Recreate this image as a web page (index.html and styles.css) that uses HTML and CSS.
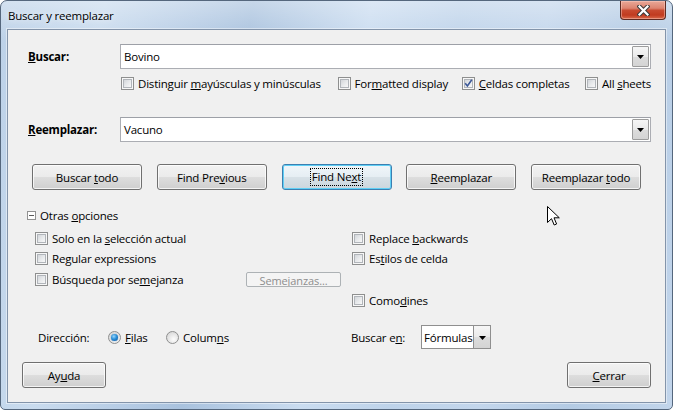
FILE: index.html
```html
<!DOCTYPE html>
<html lang="es">
<head>
<meta charset="utf-8">
<title>Buscar y reemplazar</title>
<link rel="stylesheet" href="styles.css">
</head>
<body>
<div class="window">
  <div class="titlebar">
    <span class="title">Buscar y reemplazar</span>
    <div class="close">
      <svg width="13" height="11" viewBox="0 0 13 11"><path d="M2.5 1.5 L10.5 9.5 M10.5 1.5 L2.5 9.5" stroke="#3a3a3a" stroke-width="4.2" stroke-linecap="square"/><path d="M2.5 1.5 L10.5 9.5 M10.5 1.5 L2.5 9.5" stroke="#fff" stroke-width="2.2" stroke-linecap="square"/></svg>
    </div>
  </div>
  <div class="client">
    <div class="field-row first">
      <span class="field-label"><u>B</u>uscar:</span>
      <div class="combo wide"><span class="combo-text">Bovino</span><span class="drop"><svg width="7" height="4" viewBox="0 0 7 4"><path d="M0 0 H7 L3.5 4 Z" fill="#000"/></svg></span></div>
    </div>
    <div class="check-row">
      <label class="opt w1"><span class="cb"><i></i></span><span>Distinguir <u>m</u>ayúsculas y minúsculas</span></label>
      <label class="opt w2"><span class="cb"><i></i></span><span>For<u>m</u>atted display</span></label>
      <label class="opt w3"><span class="cb"><i><svg width="9" height="9" viewBox="0 0 9 9"><path d="M1.2 4.3 L3.4 7 L7.8 0.8" fill="none" stroke="#3c5898" stroke-width="1.6"/></svg></i></span><span><u>C</u>eldas completas</span></label>
      <label class="opt"><span class="cb"><i></i></span><span>All <u>s</u>heets</span></label>
    </div>
    <div class="field-row second">
      <span class="field-label"><u>R</u>eemplazar:</span>
      <div class="combo wide"><span class="combo-text">Vacuno</span><span class="drop"><svg width="7" height="4" viewBox="0 0 7 4"><path d="M0 0 H7 L3.5 4 Z" fill="#000"/></svg></span></div>
    </div>
    <div class="button-row">
      <button class="btn act"><span>Buscar <u>t</u>odo</span></button>
      <button class="btn act"><span>Find Pre<u>v</u>ious</span></button>
      <button class="btn act default"><span class="focus">Find Ne<u>x</u>t</span></button>
      <button class="btn act"><span><u>R</u>eemplazar</span></button>
      <button class="btn act"><span>Reemplazar <u>t</u>odo</span></button>
    </div>
    <div class="expander"><span class="exp-box"></span><span>Otras <u>o</u>pciones</span></div>
    <div class="options">
      <label class="opt"><span class="cb"><i></i></span><span>Solo en la <u>s</u>elección actual</span></label>
      <label class="opt"><span class="cb"><i></i></span><span>Replace <u>b</u>ackwards</span></label>
      <label class="opt"><span class="cb"><i></i></span><span>Re<u>g</u>ular expressions</span></label>
      <label class="opt"><span class="cb"><i></i></span><span>Es<u>t</u>ilos de celda</span></label>
      <div class="opt"><label class="opt sim"><span class="cb"><i></i></span><span>Búsqueda por se<u>m</u>ejanza</span></label><button class="btn-disabled">Semejanzas...</button></div>
      <span></span>
      <span></span>
      <label class="opt"><span class="cb"><i></i></span><span>Como<u>d</u>ines</span></label>
    </div>
    <div class="dir-row">
      <div class="dir-left">
        <span class="dir-label">Dirección:</span>
        <label class="radio-opt r1"><span class="radio on"></span><span><u>F</u>ilas</span></label>
        <label class="radio-opt"><span class="radio"></span><span>Colum<u>n</u>s</span></label>
      </div>
      <span class="in-label">Buscar e<u>n</u>:</span>
      <div class="combo small"><span class="combo-text">Fórmulas</span><span class="drop boxed"><svg width="7" height="4" viewBox="0 0 7 4"><path d="M0 0 H7 L3.5 4 Z" fill="#000"/></svg></span></div>
    </div>
    <div class="bottom-row">
      <button class="btn small-btn"><span>Ay<u>u</u>da</span></button>
      <button class="btn small-btn"><span><u>C</u>errar</span></button>
    </div>
  </div>
  <svg class="cursor" width="13" height="21" viewBox="0 0 13 21"><path d="M0.5 0.5 V16.5 L4.5 12.7 L7.2 19 L9.6 18 L7 11.8 H12.3 Z" fill="#fff" stroke="#000" stroke-width="1" stroke-linejoin="miter"/></svg>
</div>
</body>
</html>
```

FILE: styles.css
```css
html, body {
  margin: 0;
  padding: 0;
  background: #ffffff;
}

body {
  font-family: "Open Sans", "Noto Sans", "DejaVu Sans", sans-serif;
  font-size: 11.5px;
  letter-spacing: -0.2px;
  color: #000;
}

.window {
  position: relative;
  width: 673px;
  height: 410px;
  box-sizing: border-box;
  border: 1px solid #55677d;
  border-radius: 7px 7px 5px 5px;
  padding: 0 6px 6px 6px;
  display: flex;
  flex-direction: column;
  background:
    linear-gradient(180deg, rgba(255,255,255,0.35) 0%, rgba(255,255,255,0) 40px),
    linear-gradient(100deg, #bcd1e8 0%, #c9dbee 14%, #b6cce5 26%, #a9c2de 34%, #cadcf0 50%, #bed3ea 62%, #c3d6ec 74%, #b4cbe4 86%, #c2d5eb 100%);
  overflow: hidden;
}

.titlebar {
  height: 28px;
  display: flex;
  justify-content: space-between;
  align-items: flex-start;
  flex: none;
}

.title {
  margin-top: 7px;
  margin-left: 1px;
  line-height: 16px;
  color: #000;
  text-shadow: 0 0 6px rgba(255,255,255,0.9);
}

.close {
  width: 46px;
  height: 19px;
  box-sizing: border-box;
  border: 1px solid #5d2a22;
  border-top: none;
  border-radius: 0 0 4px 4px;
  background: linear-gradient(180deg, #e9a898 0%, #dd8470 40%, #c84a30 52%, #c13b20 78%, #d9694b 100%);
  box-shadow: inset 0 0 0 1px rgba(255,210,200,0.45);
  display: flex;
  align-items: center;
  justify-content: center;
}

.client {
  flex: 1;
  box-sizing: border-box;
  border: 1px solid #8394aa;
  box-shadow: 0 0 0 1px rgba(255,255,255,0.45);
  background: #f0f0f0;
  display: flex;
  flex-direction: column;
  padding: 0 14px 0 0;
}

u {
  text-decoration: underline;
  text-underline-offset: 1px;
}

/* field rows */
.field-row {
  display: flex;
  align-items: center;
  height: 25px;
  padding-left: 20px;
}
.field-row.first { margin-top: 14px; }
.field-row.second { margin-top: 26px; }

.field-label {
  width: 92px;
  font-weight: bold;
  flex: none;
}

.combo {
  display: flex;
  box-sizing: border-box;
  border: 1px solid #abadb3;
  border-top-color: #9da0a7;
  background: #fff;
  align-items: stretch;
}
.combo.wide {
  width: 531px;
  height: 25px;
}
.combo-text {
  flex: 1;
  display: flex;
  align-items: center;
  padding-left: 3px;
}
.drop {
  width: 17px;
  margin: 1px;
  box-sizing: border-box;
  border: 1px solid #9c9c9c;
  border-radius: 1px;
  background: linear-gradient(180deg, #f6f6f6 0%, #eaeaea 50%, #dcdcdc 51%, #d4d4d4 100%);
  display: flex;
  align-items: center;
  justify-content: center;
}
.drop svg { margin-top: 1px; }

/* checkbox row */
.check-row {
  display: flex;
  align-items: center;
  height: 16px;
  margin-top: 6px;
  padding-left: 113px;
}
.opt {
  display: flex;
  align-items: center;
  white-space: nowrap;
}
.w1 { width: 218px; }
.w2 { width: 125px; }
.w3 { width: 124px; }

.cb {
  width: 13px;
  height: 13px;
  box-sizing: border-box;
  border: 1px solid #8e8f8f;
  padding: 1px;
  background: #f7f7f7;
  margin-right: 4px;
  flex: none;
}
.cb i {
  display: block;
  width: 9px;
  height: 9px;
  box-sizing: border-box;
  border: 1px solid #b1b5ba;
  background: linear-gradient(135deg, #d3d6da 0%, #e7e9eb 50%, #f8f8f8 100%);
}
.cb i svg {
  display: block;
  margin: -1px 0 0 -1px;
  overflow: visible;
}

/* buttons */
.button-row {
  display: flex;
  gap: 14.75px;
  margin-top: 22px;
  padding-left: 24px;
  height: 26px;
}
.btn {
  font-family: inherit;
  font-size: 11.5px;
  letter-spacing: -0.2px;
  color: #000;
  box-sizing: border-box;
  border: 1px solid #707070;
  border-radius: 3px;
  background: linear-gradient(180deg, #f2f2f2 0%, #ebebeb 48%, #dddddd 52%, #cfcfcf 100%);
  box-shadow: inset 0 0 0 1px rgba(255,255,255,0.75);
  padding: 0;
  height: 26px;
  display: flex;
  align-items: center;
  justify-content: center;
}
.btn.act { width: 110px; }
.btn.default {
  border-color: #3c7fb1;
  box-shadow: inset 0 0 0 1px #5fcff5;
  background: linear-gradient(180deg, #f0f6fa 0%, #e6eef3 48%, #d7e1e7 52%, #cbd6dd 100%);
}
.focus {
  outline: 1px dotted #000;
  outline-offset: 0;
  padding: 0 1px;
  line-height: 16px;
}

/* expander */
.expander {
  display: flex;
  align-items: center;
  height: 16px;
  margin-top: 17px;
  padding-left: 19px;
}
.exp-box {
  width: 9px;
  height: 9px;
  box-sizing: border-box;
  border: 1px solid #929292;
  background: linear-gradient(#5a5a5a, #5a5a5a) center / 5px 1px no-repeat, #fff;
  margin-right: 4px;
}

/* options grid */
.options {
  display: grid;
  grid-template-columns: 317px 1fr;
  grid-template-rows: 20px 21px 21px 21px;
  margin-top: 5px;
  padding-left: 27px;
}
.options .opt { height: 100%; }
.sim { width: 211px; }

.btn-disabled {
  font-family: inherit;
  font-size: 11px;
  letter-spacing: -0.1px;
  color: #8d8d8d;
  width: 95px;
  height: 15px;
  box-sizing: border-box;
  border: 1px solid #adb2b5;
  border-radius: 2px;
  background: #f4f4f4;
  padding: 1px 0 0 0;
  line-height: 13px;
  overflow: hidden;
  display: flex;
  justify-content: center;
  align-items: flex-start;
}

/* direction row */
.dir-row {
  display: flex;
  align-items: center;
  height: 24px;
  margin-top: 14px;
  padding-left: 30px;
}
.dir-left {
  width: 313px;
  display: flex;
  align-items: center;
}
.dir-label { width: 70px; }
.radio-opt {
  display: flex;
  align-items: center;
}
.radio-opt.r1 { width: 58px; }
.radio {
  width: 13px;
  height: 13px;
  box-sizing: border-box;
  border-radius: 50%;
  border: 1px solid #8e8f8f;
  background: radial-gradient(circle at 60% 65%, #fdfdfd 0%, #e4e4e4 55%, #cfcfcf 100%);
  margin-right: 4px;
  display: flex;
  align-items: center;
  justify-content: center;
}
.radio.on::after {
  content: "";
  width: 7px;
  height: 7px;
  border-radius: 50%;
  background: radial-gradient(circle at 40% 35%, #9ad6fb 0%, #2a8fd8 45%, #0b4f98 100%);
  box-shadow: 0 0 1px #1a5f9e;
}
.in-label { width: 70px; }
.combo.small {
  width: 70px;
  height: 24px;
  border-color: #8f8f8f;
}
.combo.small .combo-text { padding-left: 2px; }
.drop.boxed {
  margin: 0;
  border: none;
  border-left: 1px solid #8f8f8f;
  border-radius: 0;
}

/* bottom */
.bottom-row {
  display: flex;
  justify-content: space-between;
  margin-top: 13px;
  padding-left: 14px;
}
.small-btn { width: 84px; }

.cursor {
  position: absolute;
  left: 546px;
  top: 205px;
}
```
